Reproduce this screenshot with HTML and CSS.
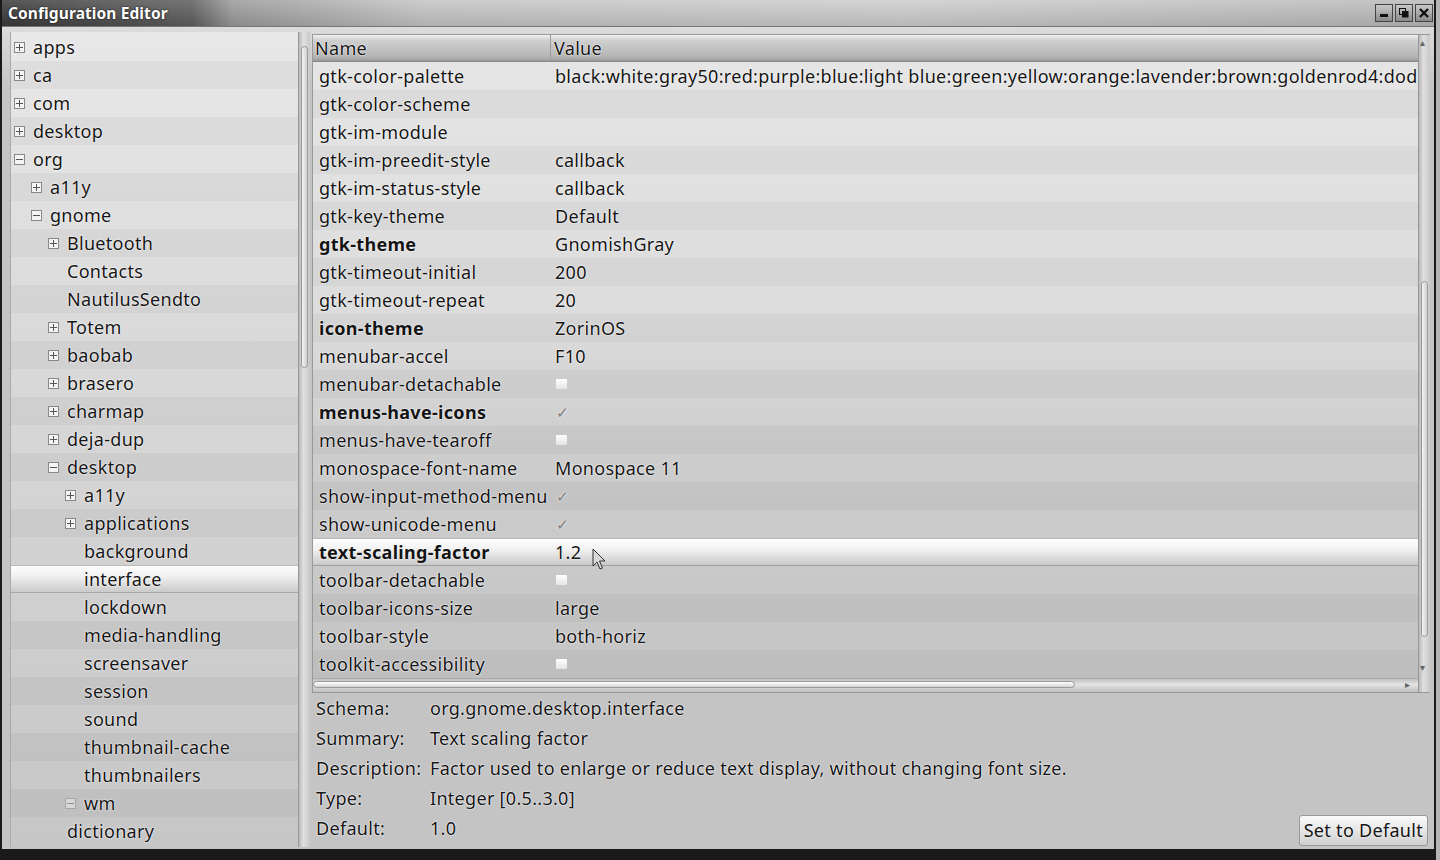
FILE: index.html
```html
<!DOCTYPE html>
<html lang="en">
<head>
    <meta charset="UTF-8">
    <title>Configuration Editor</title>
    <link rel="stylesheet" href="styles.css">
</head>
<body>
<div class="window">
    <!-- Title bar -->
    <div class="titlebar">
        <div class="title">Configuration Editor</div>
        <div class="title-buttons">
            <div class="tbtn"><svg width="10" height="10" viewBox="0 0 10 10"><rect x="1" y="6" width="8" height="3" fill="#111"/></svg></div>
            <div class="tbtn"><svg width="10" height="10" viewBox="0 0 10 10"><rect x="0.5" y="0.5" width="6" height="6" fill="none" stroke="#111"/><rect x="3" y="3" width="6.5" height="6.5" fill="#111"/></svg></div>
            <div class="tbtn"><svg width="10" height="10" viewBox="0 0 10 10"><path d="M1 1 L9 9 M9 1 L1 9" stroke="#111" stroke-width="2.4"/></svg></div>
        </div>
    </div>

    <div class="body">
        <!-- Tree pane -->
        <div class="tree-pane">
            <div class="tree">
                <div class="trow l0"><span class="exp plus"></span>apps</div>
                <div class="trow l0"><span class="exp plus"></span>ca</div>
                <div class="trow l0"><span class="exp plus"></span>com</div>
                <div class="trow l0"><span class="exp plus"></span>desktop</div>
                <div class="trow l0"><span class="exp minus"></span>org</div>
                <div class="trow l1"><span class="exp plus"></span>a11y</div>
                <div class="trow l1"><span class="exp minus"></span>gnome</div>
                <div class="trow l2"><span class="exp plus"></span>Bluetooth</div>
                <div class="trow l2"><span class="exp"></span>Contacts</div>
                <div class="trow l2"><span class="exp"></span>NautilusSendto</div>
                <div class="trow l2"><span class="exp plus"></span>Totem</div>
                <div class="trow l2"><span class="exp plus"></span>baobab</div>
                <div class="trow l2"><span class="exp plus"></span>brasero</div>
                <div class="trow l2"><span class="exp plus"></span>charmap</div>
                <div class="trow l2"><span class="exp plus"></span>deja-dup</div>
                <div class="trow l2"><span class="exp minus"></span>desktop</div>
                <div class="trow l3"><span class="exp plus"></span>a11y</div>
                <div class="trow l3"><span class="exp plus"></span>applications</div>
                <div class="trow l3"><span class="exp"></span>background</div>
                <div class="trow l3 selected"><span class="exp"></span>interface</div>
                <div class="trow l3"><span class="exp"></span>lockdown</div>
                <div class="trow l3"><span class="exp"></span>media-handling</div>
                <div class="trow l3"><span class="exp"></span>screensaver</div>
                <div class="trow l3"><span class="exp"></span>session</div>
                <div class="trow l3"><span class="exp"></span>sound</div>
                <div class="trow l3"><span class="exp"></span>thumbnail-cache</div>
                <div class="trow l3"><span class="exp"></span>thumbnailers</div>
                <div class="trow l3"><span class="exp minus faint"></span>wm</div>
                <div class="trow l2"><span class="exp"></span>dictionary</div>
            </div>
            <div class="vscroll tree-scroll"><div class="thumb"></div></div>
        </div>

        <!-- Keys pane -->
        <div class="main">
            <div class="list-pane">
                <div class="list">
                    <div class="list-head">
                        <div class="col-name">Name</div>
                        <div class="col-value">Value</div>
                    </div>
                    <div class="rows">
                        <div class="row"><div class="col-name">gtk-color-palette</div><div class="col-value">black:white:gray50:red:purple:blue:light blue:green:yellow:orange:lavender:brown:goldenrod4:dode</div></div>
                        <div class="row"><div class="col-name">gtk-color-scheme</div><div class="col-value"></div></div>
                        <div class="row"><div class="col-name">gtk-im-module</div><div class="col-value"></div></div>
                        <div class="row"><div class="col-name">gtk-im-preedit-style</div><div class="col-value">callback</div></div>
                        <div class="row"><div class="col-name">gtk-im-status-style</div><div class="col-value">callback</div></div>
                        <div class="row"><div class="col-name">gtk-key-theme</div><div class="col-value">Default</div></div>
                        <div class="row bold"><div class="col-name">gtk-theme</div><div class="col-value">GnomishGray</div></div>
                        <div class="row"><div class="col-name">gtk-timeout-initial</div><div class="col-value">200</div></div>
                        <div class="row"><div class="col-name">gtk-timeout-repeat</div><div class="col-value">20</div></div>
                        <div class="row bold"><div class="col-name">icon-theme</div><div class="col-value">ZorinOS</div></div>
                        <div class="row"><div class="col-name">menubar-accel</div><div class="col-value">F10</div></div>
                        <div class="row"><div class="col-name">menubar-detachable</div><div class="col-value"><span class="check"></span></div></div>
                        <div class="row bold"><div class="col-name">menus-have-icons</div><div class="col-value"><span class="check on">✓</span></div></div>
                        <div class="row"><div class="col-name">menus-have-tearoff</div><div class="col-value"><span class="check"></span></div></div>
                        <div class="row"><div class="col-name">monospace-font-name</div><div class="col-value">Monospace 11</div></div>
                        <div class="row"><div class="col-name">show-input-method-menu</div><div class="col-value"><span class="check on">✓</span></div></div>
                        <div class="row"><div class="col-name">show-unicode-menu</div><div class="col-value"><span class="check on">✓</span></div></div>
                        <div class="row bold selected"><div class="col-name">text-scaling-factor</div><div class="col-value">1.2</div></div>
                        <div class="row"><div class="col-name">toolbar-detachable</div><div class="col-value"><span class="check"></span></div></div>
                        <div class="row"><div class="col-name">toolbar-icons-size</div><div class="col-value">large</div></div>
                        <div class="row"><div class="col-name">toolbar-style</div><div class="col-value">both-horiz</div></div>
                        <div class="row"><div class="col-name">toolkit-accessibility</div><div class="col-value"><span class="check"></span></div></div>
                    </div>
                    <div class="hscroll"><div class="thumb"></div><span class="arrow">▸</span></div>
                    <svg class="cursor" width="16" height="24" viewBox="0 0 16 24"><path d="M1 1 L1 18 L5 14 L8 21 L10.5 20 L7.5 13 L13 13 Z" fill="#d8d8d8" stroke="#333" stroke-width="1"/></svg>
                </div>
                <div class="vscroll list-scroll"><span class="arrow up">▴</span><div class="thumb"></div><span class="arrow down">▾</span></div>
            </div>

            <div class="details">
                <div class="info">
                    <div class="label">Schema:</div><div>org.gnome.desktop.interface</div>
                    <div class="label">Summary:</div><div>Text scaling factor</div>
                    <div class="label">Description:</div><div>Factor used to enlarge or reduce text display, without changing font size.</div>
                    <div class="label">Type:</div><div>Integer [0.5..3.0]</div>
                    <div class="label">Default:</div><div>1.0</div>
                </div>
                <button class="btn">Set to Default</button>
            </div>
        </div>
    </div>
</div>
</body>
</html>
```

FILE: styles.css
```css
/* Reset */
* {
    margin: 0;
    padding: 0;
    box-sizing: border-box;
}

body {
    width: 1440px;
    height: 860px;
    overflow: hidden;
    background: #b4b4b4;
    font-family: 'Noto Sans', 'Open Sans', sans-serif;
    font-size: 18px;
    letter-spacing: 0.3px;
    color: #141414;
}

.window {
    width: 1436px;
    height: 860px;
    display: flex;
    flex-direction: column;
    background: #c6c6c6;
    border-left: 2px solid #1a1a1a;
    border-right: 2px solid #1a1a1a;
    border-bottom: 11px solid #1a1a1a;
}

/* Title bar */
.titlebar {
    height: 27px;
    display: flex;
    align-items: center;
    justify-content: space-between;
    background:
        linear-gradient(to bottom, rgba(255,255,255,0.15), rgba(0,0,0,0.1)),
        linear-gradient(to right, #3a3a3a 0, #5e5e5e 190px, #9a9a9a 230px, #c4c4c4 420px, #cdcdcd 900px, #b9b9b9 100%);
    border-bottom: 1px solid #777;
}

.title {
    padding-left: 6px;
    color: #fff;
    font-weight: bold;
    font-size: 15.5px;
    letter-spacing: 0.1px;
    text-shadow: 0 0 2px #000;
}

.title-buttons {
    display: flex;
    gap: 2px;
    padding-right: 1px;
}

.tbtn {
    width: 18px;
    height: 18px;
    display: flex;
    align-items: center;
    justify-content: center;
    background: linear-gradient(#c8c8c8, #8a8a8a);
    border: 1px solid #444;
}

/* Body */
.body {
    flex: 1;
    display: flex;
    padding: 5px 4px 2px 8px;
    gap: 2px;
    background: linear-gradient(#dcdcdc, #c4c4c4 60px, #c4c4c4);
}

.tree-pane {
    width: 300px;
    flex-shrink: 0;
    display: flex;
    border-left: 1px solid #aaa;
}

.tree {
    flex: 1;
    min-width: 0;
    overflow: hidden;
    padding-top: 1px;
    background: linear-gradient(#e8e8e8, #dadada 300px, #c6c6c6);
    text-shadow: 0 0 2px #fff, 0 0 1px #fff;
}

.trow {
    height: 28px;
    display: flex;
    align-items: center;
    white-space: nowrap;
}

.trow:nth-child(even) {
    background: rgba(0, 0, 0, 0.035);
}

.trow.l0 { padding-left: 3px; }
.trow.l1 { padding-left: 20px; }
.trow.l2 { padding-left: 37px; }
.trow.l3 { padding-left: 54px; }

.trow.selected {
    background: linear-gradient(#ffffff, #f0f0f0 40%, #c8c8c8);
    box-shadow: inset 0 -1px 0 #a8a8a8, inset 0 1px 0 #bbb;
}

/* Expander box */
.exp {
    position: relative;
    width: 11px;
    height: 11px;
    margin-right: 8px;
    flex-shrink: 0;
}

.exp.plus, .exp.minus {
    border: 1px solid #888;
    background: #f4f4f4;
}

.exp.plus::before, .exp.minus::before {
    content: "";
    position: absolute;
    left: 1px;
    right: 1px;
    top: 4px;
    height: 1px;
    background: #555;
}

.exp.plus::after {
    content: "";
    position: absolute;
    top: 1px;
    bottom: 1px;
    left: 4px;
    width: 1px;
    background: #555;
}

.exp.faint {
    opacity: 0.45;
}

/* Scrollbars */
.vscroll {
    width: 12px;
    flex-shrink: 0;
    background: linear-gradient(to right, #b8b8b8, #e0e0e0 40%, #c8c8c8);
    border-left: 1px solid #999;
    position: relative;
}

.vscroll .thumb {
    position: absolute;
    left: 2px;
    right: 2px;
    background: linear-gradient(to right, #f4f4f4, #d0d0d0);
    border: 1px solid #999;
    border-radius: 4px;
}

.tree-scroll .thumb {
    top: 14px;
    height: 322px;
}

.arrow {
    position: absolute;
    font-size: 10px;
    line-height: 10px;
    color: #666;
    text-shadow: none;
}

.vscroll .arrow {
    left: 1px;
}

.vscroll .arrow.up { top: 2px; }
.vscroll .arrow.down { bottom: 20px; }

.main {
    flex: 1;
    min-width: 0;
    display: flex;
    flex-direction: column;
}

.list-pane {
    height: 659px;
    margin-top: 2px;
    display: flex;
    border: 1px solid #999;
    border-right: none;
}

.list {
    flex: 1;
    min-width: 0;
    display: flex;
    flex-direction: column;
    position: relative;
    overflow: hidden;
    background: linear-gradient(#e6e6e6, #dcdcdc 280px, #cdcdcd 420px, #c4c4c4);
    text-shadow: 0 0 2px #fff, 0 0 1px #fff;
}

.list-head {
    height: 27px;
    flex-shrink: 0;
    display: flex;
    align-items: center;
    background: linear-gradient(#f2f2f2, #d0d0d0 20%, #b4b4b4 85%, #9a9a9a);
    border-bottom: 1px solid #888;
}

.list-head .col-name {
    padding-left: 2px;
    border-right: 1px solid #9a9a9a;
    height: 100%;
    display: flex;
    align-items: center;
}

.col-name {
    width: 238px;
    padding-left: 6px;
    flex-shrink: 0;
    white-space: nowrap;
}

.col-value {
    height: 100%;
    min-width: 0;
    display: flex;
    align-items: center;
    padding-left: 4px;
    white-space: nowrap;
    overflow: hidden;
}

.list-head .col-value {
    padding-left: 3px;
}

.rows {
    flex: 1;
}

.row {
    height: 28px;
    display: flex;
    align-items: center;
}

.row:nth-child(even) {
    background: rgba(0, 0, 0, 0.035);
}

.row.bold {
    font-weight: bold;
}

.row.bold .col-value {
    font-weight: normal;
}

.row.selected {
    background: linear-gradient(#ffffff, #f2f2f2 40%, #c6c6c6);
    box-shadow: inset 0 -1px 0 #a0a0a0, inset 0 1px 0 #b8b8b8;
}

/* Check boxes */
.check {
    display: inline-block;
    width: 11px;
    height: 10px;
    margin-left: 1px;
    background: linear-gradient(#ffffff, #e4e4e4);
    border-radius: 1px;
}

.check.on {
    width: 14px;
    height: 16px;
    background: none;
    color: #8a8a8a;
    font-size: 15px;
    font-weight: bold;
    line-height: 16px;
    text-align: center;
}

.hscroll {
    height: 12px;
    flex-shrink: 0;
    position: relative;
    background: linear-gradient(#c0c0c0, #e4e4e4 50%, #c8c8c8);
    border-top: 1px solid #aaa;
    margin-bottom: 3px;
}

.hscroll .thumb {
    position: absolute;
    left: 0;
    width: 762px;
    top: 2px;
    bottom: 2px;
    background: linear-gradient(#ffffff, #d4d4d4);
    border: 1px solid #999;
    border-radius: 4px;
}

.hscroll .arrow {
    right: 8px;
    top: 0;
}

.list-scroll .thumb {
    top: 246px;
    height: 356px;
}

.cursor {
    position: absolute;
    left: 279px;
    top: 513px;
}

/* Details */
.details {
    flex: 1;
    display: flex;
    justify-content: space-between;
    align-items: flex-end;
    padding: 0 2px 0 4px;
    text-shadow: 0 0 2px #fff, 0 0 1px #fff;
}

.info {
    align-self: flex-start;
    display: grid;
    grid-template-columns: 114px auto;
    grid-auto-rows: 30px;
    align-items: center;
}

.btn {
    font-family: inherit;
    font-size: 18px;
    letter-spacing: 0.3px;
    color: #141414;
    padding: 2px 4px 3px;
    margin-bottom: 1px;
    border: 1px solid #999;
    border-radius: 3px;
    background: linear-gradient(#fafafa, #e6e6e6 50%, #cfcfcf);
    text-shadow: 0 0 2px #fff;
}
```
